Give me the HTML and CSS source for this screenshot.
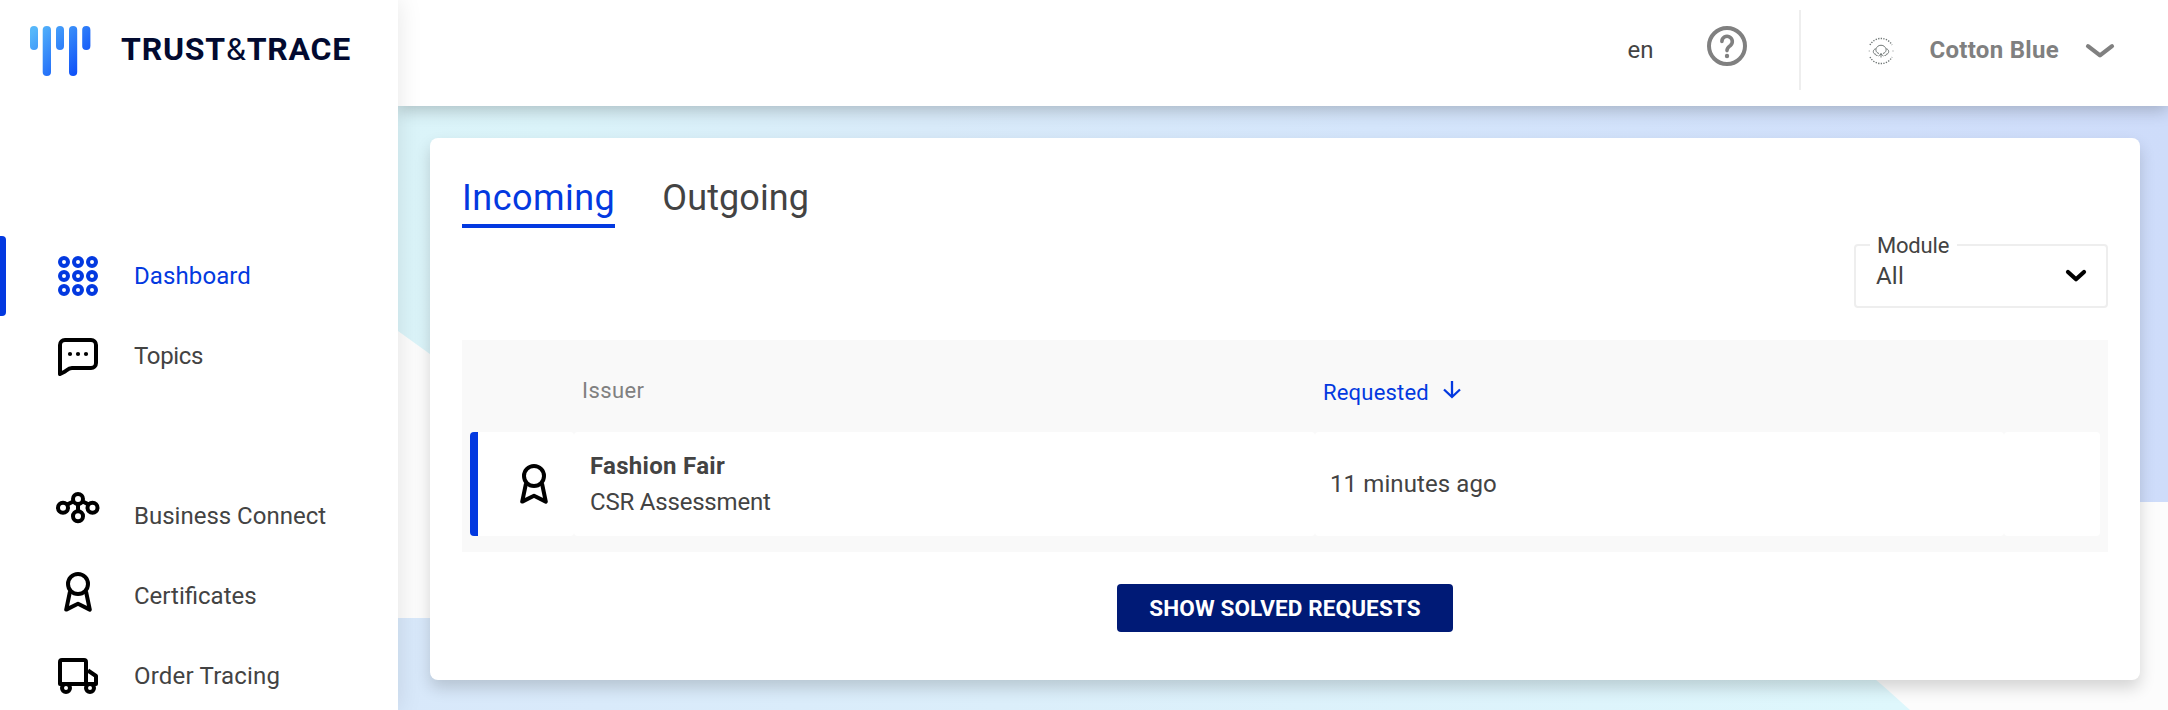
FILE: index.html
```html
<!DOCTYPE html>
<html lang="en">
<head>
<meta charset="utf-8">
<title>Trust&amp;Trace</title>
<link rel="stylesheet" href="styles.css">
</head>
<body>
<svg class="defs" width="0" height="0" aria-hidden="true">
  <symbol id="award" viewBox="0 0 28 40">
    <g fill="none" stroke="#000" stroke-width="4" stroke-linejoin="round">
      <circle cx="14" cy="12" r="10"/>
      <path d="M6 19.500 2.200 37.600 14 31.800 25.800 37.600 22 19.500"/>
    </g>
  </symbol>
</svg>
<div class="app">
  <aside class="sidebar">
    <div class="brand">
      <svg class="brand-mark" width="62" height="50" viewBox="0 0 62 50">
        <defs><linearGradient id="bars" gradientUnits="userSpaceOnUse" x1="2" y1="6" x2="48" y2="50"><stop offset="0" stop-color="#56b7fa"/><stop offset="1" stop-color="#0c4cf8"/></linearGradient></defs>
        <g fill="url(#bars)">
          <rect x="0" y="0" width="8" height="24" rx="4"/>
          <rect x="12.7" y="0" width="8.3" height="50" rx="4.1"/>
          <rect x="26" y="0" width="8" height="24" rx="4"/>
          <rect x="39" y="0" width="8.2" height="50" rx="4.1"/>
          <rect x="52.2" y="0" width="8.2" height="24" rx="4"/>
        </g>
      </svg>
      <span class="brand-name">TRUST<span class="amp">&amp;</span>TRACE</span>
    </div>
    <nav class="nav">
      <a class="nav-item active">
        <span class="marker"></span>
        <span class="nav-icon"><svg width="40" height="40" viewBox="0 0 40 40" fill="none" stroke="#0339e0" stroke-width="4"><circle cx="6" cy="6" r="4"/><circle cx="20" cy="6" r="4"/><circle cx="34" cy="6" r="4"/><circle cx="6" cy="20" r="4"/><circle cx="20" cy="20" r="4"/><circle cx="34" cy="20" r="4"/><circle cx="6" cy="34" r="4"/><circle cx="20" cy="34" r="4"/><circle cx="34" cy="34" r="4"/></svg></span>
        <span class="t-dashboard">Dashboard</span>
      </a>
      <a class="nav-item">
        <span class="nav-icon lowered"><svg width="40" height="40" viewBox="0 0 40 40"><path d="M2 36V7a5 5 0 0 1 5-5h26a5 5 0 0 1 5 5v18a5 5 0 0 1-5 5H14c-3 0-5 2-7 3.500z" fill="none" stroke="#000" stroke-width="4" stroke-linejoin="round"/><circle cx="12" cy="16" r="2.100"/><circle cx="20" cy="16" r="2.100"/><circle cx="28" cy="16" r="2.100"/></svg></span>
        <span class="t-topics">Topics</span>
      </a>
      <a class="nav-item spaced">
        <span class="nav-icon raised"><svg width="44" height="32" viewBox="0 0 44 32" fill="none" stroke="#000" stroke-width="4"><circle cx="7" cy="15.700" r="5"/><circle cx="22" cy="7" r="5"/><circle cx="36.500" cy="15.700" r="5"/><circle cx="22" cy="24.300" r="5"/><path d="M22 12v8M11 12.600 17.300 9.500M33 12.600 26.700 9.500"/></svg></span>
        <span class="t-business">Business Connect</span>
      </a>
      <a class="nav-item">
        <span class="nav-icon lifted"><svg class="award" width="28" height="40"><use href="#award"/></svg></span>
        <span class="t-cert">Certificates</span>
      </a>
      <a class="nav-item">
        <span class="nav-icon"><svg width="40" height="36" viewBox="0 0 40 36" fill="none" stroke="#000" stroke-width="4" stroke-linejoin="round"><path d="M28 26V4a2 2 0 0 0-2-2H4a2 2 0 0 0-2 2v22h36v-8L30 12.500M28 26V12"/><g fill="#fff"><circle cx="8" cy="30" r="4"/><circle cx="32" cy="30" r="4"/></g></svg></span>
        <span class="t-order">Order Tracing</span>
      </a>
    </nav>
  </aside>
  <div class="content">
    <header class="topbar">
      <span class="lang">en</span>
      <svg class="help" width="40" height="40" viewBox="0 0 40 40" fill="none" stroke="#808080"><circle cx="20" cy="20" r="18" stroke-width="4"/><path d="M14.900 15.500a5.200 5.200 0 1 1 8.500 4c-2.200 1.700-3.400 2.200-3.400 5.100" stroke-width="3.600" stroke-linecap="round"/><circle cx="20" cy="30" r="2.200" fill="#808080" stroke="none"/></svg>
      <span class="divider"></span>
      <svg class="avatar" width="26" height="28" viewBox="0 0 26 28" fill="none" stroke="#6f7675"><path d="M2 8A12.500 12.500 0 0 1 24 8M2 20a12.500 12.500 0 0 0 22 0" stroke-width="1.400" stroke-dasharray="1.300 1.300"/><path d="M.8 14h.8M24.600 14h.8" stroke-width="1.200"/><path d="M9.500 18.500C8 18.800 7.500 18 7.800 17.300 4.500 17 4.500 12.300 7.800 11.800M16.500 18.500c1.500.3 2-.5 1.700-1.200 3.300-.3 3.300-5 0-5.500M11 16.500C7.500 15.500 7 12 9.500 9.500 11.500 7.800 14.500 7.800 16.500 9.500 19 12 18.500 15.500 15 16.500M13 20.500v-4.500M13 17l-2.500 2M13 17l2.500 2" stroke-width="1"/></svg>
      <span class="account">Cotton Blue</span>
      <svg class="chev" width="30" height="16" viewBox="0 0 30 16" fill="none" stroke="#808080" stroke-width="4.200" stroke-linecap="round" stroke-linejoin="round"><path d="M3 3.200 15 12.400 27 3.200"/></svg>
    </header>
    <main class="stage">
      <svg class="backdrop" width="1770" height="604" viewBox="0 0 1770 604" preserveAspectRatio="none">
        <defs>
          <linearGradient id="sky"><stop offset="0" stop-color="#dbf4f9"/><stop offset=".09" stop-color="#daf3f9"/><stop offset=".3" stop-color="#d8eaf9"/><stop offset=".55" stop-color="#d4e5fb"/><stop offset="1" stop-color="#cedcfa"/></linearGradient>
          <linearGradient id="sea" gradientUnits="userSpaceOnUse" x1="0" y1="0" x2="1500" y2="0"><stop offset="0" stop-color="#d8e8fa"/><stop offset=".4" stop-color="#dbeefa"/><stop offset="1" stop-color="#def7fc"/></linearGradient>
        </defs>
        <path d="M0 0H1770V396H237L0 225z" fill="url(#sky)"/>
        <path d="M0 512H1400Q1460 556 1512 604H0z" fill="url(#sea)"/>
      </svg>
      <section class="card">
        <div class="tabs">
          <a class="tab current">Incoming</a>
          <a class="tab other">Outgoing</a>
        </div>
        <fieldset class="select">
          <legend>Module</legend>
          <div class="select-value"><span>All</span><svg width="22" height="14" viewBox="0 0 22 14" fill="none" stroke="#000" stroke-width="4.200" stroke-linecap="round" stroke-linejoin="round"><path d="M3 3 11 10.300 19 3"/></svg></div>
        </fieldset>
        <div class="table">
          <div class="row head">
            <span></span>
            <span class="issuer">Issuer</span>
            <span class="requested"><span>Requested</span><svg width="18" height="18" viewBox="0 0 18 18" fill="none" stroke="#0339e0" stroke-width="2.300"><path d="M9 0V16M1 8.500 9 16 17 8.500"/></svg></span>
            <span></span>
          </div>
          <div class="row body">
            <span class="cell mark"><svg width="28" height="40"><use href="#award"/></svg></span>
            <span class="cell who"><b>Fashion Fair</b><span class="kind">CSR Assessment</span></span>
            <span class="cell when"><span>11 minutes ago</span></span>
            <span class="cell"></span>
          </div>
        </div>
        <button class="solved">SHOW SOLVED REQUESTS</button>
      </section>
    </main>
  </div>
</div>
</body>
</html>
```
FILE: styles.css
```css
* { box-sizing: border-box; }
body { margin: 0; font-family: Roboto, "Liberation Sans", sans-serif; font-size: 24px; line-height: 36px; color: #434343; background: #fcfcfc; }
.defs { position: absolute; }
.app { display: flex; width: 2168px; height: 710px; overflow: hidden; }

.sidebar { width: 398px; flex: none; background: #fff; box-shadow: 0 0 24px rgba(0, 0, 0, .1); z-index: 3; }
.brand { display: flex; height: 236px; padding: 26px 0 0 30px; align-items: flex-start; }
.brand-name { margin: 5px 0 0 29px; font-size: 32px; font-weight: 700; color: #020a30; letter-spacing: .8px; white-space: nowrap; }
.amp { font-weight: 400; }
.nav-item { display: flex; height: 80px; align-items: center; padding-left: 55px; white-space: nowrap; }
.nav-item.active { color: #0339e0; padding-left: 0; }
.marker { width: 6px; height: 80px; margin-right: 49px; background: #0339e0; border-radius: 0 4px 4px 0; }
.nav-item.spaced { margin-top: 80px; }
.nav-icon { width: 45px; margin-right: 34px; display: flex; justify-content: center; align-items: center; }
.nav-icon.raised { padding-bottom: 17px; }
.nav-icon.lifted { padding-bottom: 8px; }
.nav-icon.lowered { padding-top: 4px; }
.t-dashboard { letter-spacing: .1px; }
.t-topics { letter-spacing: -.35px; }
.t-order { letter-spacing: .2px; }

.content { flex: 1; display: flex; flex-direction: column; }
.topbar { height: 106px; flex: none; display: flex; align-items: flex-start; justify-content: flex-end; padding: 10px 53px 0 0; background: #fff; box-shadow: 0 4px 16px rgba(0, 0, 0, .22); z-index: 2; }
.lang { margin: 22px 54px 0 0; }
.help { margin: 16px 52px 0 0; }
.divider { width: 2px; height: 80px; background: #eee; margin-right: 67px; }
.avatar { margin: 27px 35px 0 0; }
.account { margin: 22px 26px 0 0; font-weight: 700; letter-spacing: .3px; color: #808080; }
.chev { margin-top: 33px; }

.stage { flex: 1; display: grid; }
.backdrop { grid-area: 1 / 1; }
.card { grid-area: 1 / 1; margin: 32px 28px 30px 32px; padding: 36px 32px 48px; display: flex; flex-direction: column; background: #fff; border-radius: 8px; box-shadow: 0 8px 16px rgba(0, 0, 0, .16); z-index: 1; }
.tabs { display: flex; gap: 47px; height: 54px; font-size: 36px; line-height: 48px; letter-spacing: .48px; }
.tab.current { height: 54px; color: #0339e0; border-bottom: 4px solid #0339e0; }
.tab.other { letter-spacing: .1px; }
.select { align-self: flex-end; width: 254px; height: 76px; margin: 4px 0 0; padding: 0 19px 0 20px; border: 2px solid #eee; border-radius: 4px; }
.select legend { margin-left: -6px; padding: 1px 8px 0 7px; font-size: 22px; line-height: 25px; letter-spacing: -.2px; }
.select-value { display: flex; justify-content: space-between; align-items: center; margin-top: 6px; line-height: 24px; letter-spacing: .2px; }
.table { margin-top: 32px; height: 212px; padding: 0 8px; background: #f9f9f9; }
.row { display: grid; grid-template-columns: 104px 741px 689px 96px; }
.head { height: 92px; font-size: 22px; align-items: center; }
.issuer { padding: 9px 0 0 8px; letter-spacing: .4px; color: #808080; }
.requested { display: flex; align-items: center; gap: 14px; padding: 13px 0 0 8px; letter-spacing: .2px; color: #0339e0; }
.requested svg { margin-bottom: 6px; }
.body { height: 104px; }
.cell { display: flex; background: #fff; border-radius: 4px; }
.mark { border-left: 8px solid #0339e0; align-items: center; padding-left: 42px; }
.who { flex-direction: column; justify-content: center; padding-left: 16px; }
.who b { letter-spacing: .3px; }
.kind { letter-spacing: -.2px; }
.when { align-items: center; padding-left: 15px; letter-spacing: .1px; }
.solved { align-self: center; width: 336px; height: 48px; margin-top: 32px; padding: 0; border: 0; border-radius: 4px; background: #001a76; color: #fff; font: 700 22.5px Roboto, "Liberation Sans", sans-serif; letter-spacing: .12px; white-space: nowrap; }
```
